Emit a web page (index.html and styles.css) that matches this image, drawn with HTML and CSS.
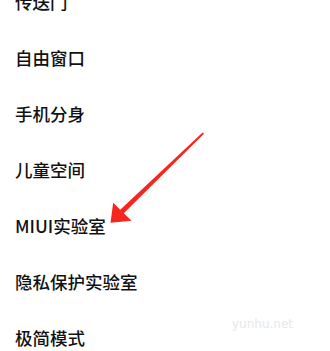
FILE: index.html
```html
<!DOCTYPE html>
<html lang="zh-CN">
  <head>
    <meta charset="UTF-8" />
    <meta name="viewport" content="width=device-width, initial-scale=1.0" />
    <title>更多设置</title>
    <link rel="stylesheet" href="styles.css">
  </head>
  <body>
    <div class="screen">
      <ul class="menu">
        <li class="item">传送门</li>
        <li class="item">自由窗口</li>
        <li class="item">手机分身</li>
        <li class="item">儿童空间</li>
        <li class="item">MIUI实验室</li>
        <li class="item">隐私保护实验室</li>
        <li class="item">极简模式</li>
      </ul>

      <svg class="arrow" width="330" height="351" viewBox="0 0 330 351">
        <polygon points="202.6,132.4 204,133.8 123.8,213.2 131.5,220.8 110.5,222.8 113.2,202.8 120.2,209.8" />
      </svg>

      <div class="watermark">yunhu.net</div>
    </div>
  </body>
</html>
```

FILE: styles.css
```css
body {
  margin: 0;
  background: #fff;
  font-family: "Noto Sans CJK SC", "Noto Sans", sans-serif;
}
.screen {
  position: relative;
  width: 330px;
  height: 351px;
  overflow: hidden;
}
.menu {
  list-style: none;
  margin: -26px 0 0 0;
  padding: 0;
}
.item {
  height: 56px;
  line-height: 56px;
  padding-left: 15px;
  font-size: 17.5px;
  font-weight: 500;
  color: #111;
}
.arrow {
  position: absolute;
  left: 0;
  top: 0;
}
.arrow polygon {
  fill: #f5261f;
}
.watermark {
  position: absolute;
  left: 232px;
  top: 317px;
  font-family: "DejaVu Sans", sans-serif;
  font-size: 12px;
  color: #e8e8e8;
}
```
